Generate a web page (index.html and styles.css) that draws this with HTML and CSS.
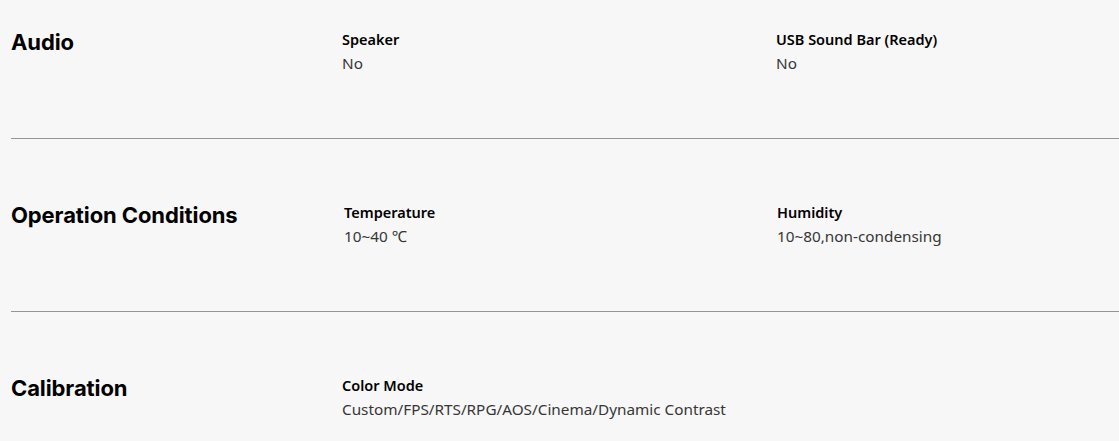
FILE: index.html
```html
<!DOCTYPE html>
<html lang="en">
<head>
<meta charset="utf-8">
<title>Specs</title>
<link rel="stylesheet" href="styles.css">
</head>
<body>
<div class="specs">
  <section class="row">
    <h2 class="title">Audio</h2>
    <div class="items">
      <div class="item"><div class="label">Speaker</div><div class="value">No</div></div>
      <div class="item"><div class="label">USB Sound Bar (Ready)</div><div class="value">No</div></div>
    </div>
  </section>
  <section class="row row-shift">
    <h2 class="title">Operation Conditions</h2>
    <div class="items">
      <div class="item"><div class="label">Temperature</div><div class="value">10~40 ℃</div></div>
      <div class="item"><div class="label">Humidity</div><div class="value">10~80,non-condensing</div></div>
    </div>
  </section>
  <section class="row">
    <h2 class="title">Calibration</h2>
    <div class="items">
      <div class="item"><div class="label">Color Mode</div><div class="value">Custom/FPS/RTS/RPG/AOS/Cinema/Dynamic Contrast</div></div>
    </div>
  </section>
</div>
</body>
</html>
```

FILE: styles.css
```css
html, body {
  margin: 0;
  padding: 0;
  background: #f7f7f7;
  overflow: hidden;
}
.specs {
  margin-top: -34px;
  padding-left: 11px;
}
.row {
  display: flex;
  height: 173px;
  box-sizing: border-box;
  padding-top: 61px;
  border-bottom: 1px solid #959595;
}
.title {
  margin: 0;
  width: 331px;
  flex: none;
  font-family: Inter, "Liberation Sans", sans-serif;
  font-weight: 700;
  font-size: 22px;
  line-height: 30px;
  letter-spacing: -0.1px;
  color: #000;
}
.items {
  display: flex;
  flex: 1;
  min-width: 0;
}
.item {
  flex: 0 0 434px;
}
.item:last-child {
  flex: 1 1 auto;
}
.row-shift .items { padding-left: 2px; }
.row-shift .item { flex-basis: 433px; }
.label {
  font-family: "Noto Sans", "Open Sans", sans-serif;
  font-weight: 600;
  font-size: 14.5px;
  line-height: 24px;
  color: #000;
}
.value {
  font-family: "Noto Sans", "Open Sans", sans-serif;
  font-weight: 400;
  font-size: 15.3px;
  line-height: 24px;
  color: #363636;
}
```
